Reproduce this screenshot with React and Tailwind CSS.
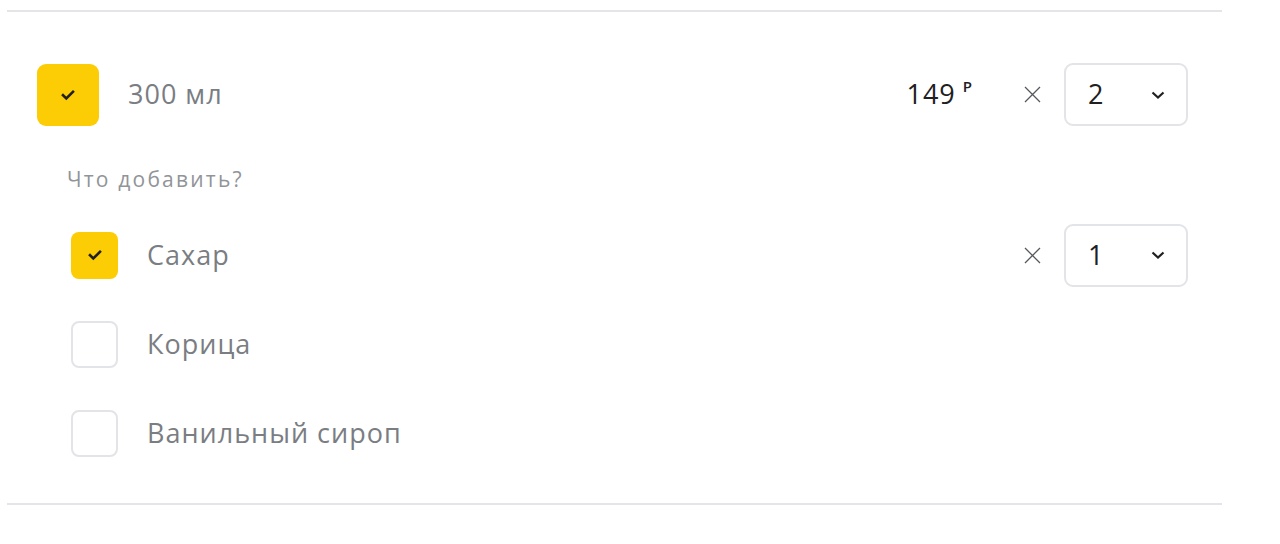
const Check = () => (
    <svg width="14" height="12" viewBox="0 0 14 12" fill="none">
        <path d="M2 6.2l3.3 3.3L12 2.8" stroke="#21201f" strokeWidth="2.6" strokeLinecap="square" />
    </svg>
);

const Chevron = () => (
    <svg width="16" height="10" viewBox="0 0 16 10" fill="none">
        <path d="M2.5 2.5l5.5 5L13.5 2.5" stroke="#21201f" strokeWidth="2.2" />
    </svg>
);

const Times = () => (
    <svg width="19" height="19" viewBox="0 0 19 19" fill="none">
        <path d="M2 2l15 15M17 2L2 17" stroke="#55585c" strokeWidth="1.3" />
    </svg>
);

const Box = ({ checked, big }) => (
    <div
        className={
            (big ? "w-[62px] h-[62px] rounded-[9px] " : "w-[47px] h-[47px] rounded-[8px] ") +
            (checked ? "bg-[#fccc04]" : "border-2 border-[#e2e4e7] bg-white") +
            " flex items-center justify-center shrink-0"
        }
    >
        {checked && <Check />}
    </div>
);

const Qty = ({ value }) => (
    <div className="flex items-center">
        <Times />
        <div className="ml-[22px] w-[124px] h-[63px] rounded-[9px] border-2 border-[#e2e4e7] flex items-center pl-[22px] pr-[20px] justify-between">
            <span className="text-[27px] text-[#21201f]">{value}</span>
            <Chevron />
        </div>
    </div>
);

const extras = [
    { name: "Сахар", checked: true, qty: 1 },
    { name: "Корица", checked: false },
    { name: "Ванильный сироп", checked: false },
];

export default function App() {
    return (
        <div
            className="bg-white w-[1280px] h-[544px] pt-[10px]"
            style={{ fontFamily: "'Open Sans', 'Noto Sans', sans-serif" }}
        >
            <div className="ml-[7px] w-[1215px] border-t-2 border-b-2 border-[#e3e5e8] pl-[30px] pr-[34px] pt-[51px] pb-[38px]">
                <div className="flex items-center h-[63px]">
                    <Box checked big />
                    <span className="ml-[29px] text-[27px] tracking-[1px] text-[#7a7d82]">300 мл</span>
                    <div className="flex-1" />
                    <span className="text-[27px] text-[#21201f] tracking-[1px] flex items-start">
                        149
                        <span className="ml-[7px] mt-[5px] text-[15px] leading-[15px] font-semibold tracking-normal">Р</span>
                    </span>
                    <div className="ml-[51px]">
                        <Qty value={2} />
                    </div>
                </div>
                <div className="mt-[40px] ml-[30px] text-[21px] leading-[26px] tracking-[2.2px] text-[#919498]">
                    Что добавить?
                </div>
                <div className="mt-[31px] pl-[34px] flex flex-col gap-[25px]">
                    {extras.map((e) => (
                        <div key={e.name} className="flex items-center h-[64px]">
                            <Box checked={e.checked} />
                            <span className="ml-[29px] text-[27px] tracking-[1px] text-[#7a7d82]">{e.name}</span>
                            <div className="flex-1" />
                            {e.qty && <Qty value={e.qty} />}
                        </div>
                    ))}
                </div>
            </div>
        </div>
    );
}
